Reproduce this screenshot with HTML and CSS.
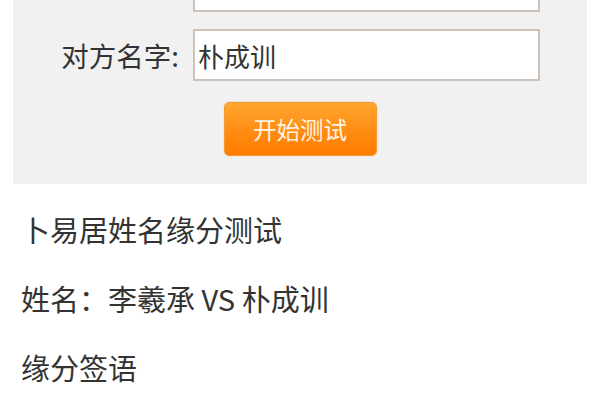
FILE: index.html
```html
<!DOCTYPE html>
<html lang="zh-CN">
<head>
<meta charset="utf-8">
<link rel="stylesheet" href="styles.css">
</head>
<body>
<form class="panel">
  <div class="row">
    <span class="label"></span>
    <input class="field" type="text" value="">
  </div>
  <div class="row">
    <label class="label">对方名字:</label>
    <input class="field" type="text" value="朴成训">
  </div>
  <div class="actions">
    <button class="btn" type="button">开始测试</button>
  </div>
</form>
<div class="result">
  <p class="line">卜易居姓名缘分测试</p>
  <p class="line">姓名：李羲承 VS 朴成训</p>
  <p class="line">缘分签语</p>
</div>
</body>
</html>
```
FILE: styles.css
```css
html, body {
  margin: 0;
  padding: 0;
  background: #ffffff;
  font-family: "Noto Sans CJK SC", "Noto Sans", sans-serif;
  color: #333333;
}
.panel {
  margin: -57px 13px 0;
  padding: 17px 0 27px;
  background: #f1f1f1;
  display: flex;
  flex-direction: column;
  gap: 17px;
  border-bottom: 1px solid #f1f1f1;
}
.row {
  display: grid;
  grid-template-columns: 180px 347px;
  align-items: center;
}
.label {
  text-align: right;
  padding-right: 14px;
  font-size: 27.5px;
  color: #333;
}
.field {
  box-sizing: border-box;
  height: 52px;
  width: 347px;
  margin: 0;
  border: 2px solid #cfc2b8;
  background: #ffffff;
  padding: 0 3px;
  font-family: "Noto Sans CJK SC", sans-serif;
  font-size: 26px;
  color: #333;
  outline: none;
}
.actions {
  display: flex;
  justify-content: center;
  padding-top: 4px;
}
.btn {
  width: 153px;
  height: 54px;
  border: 1px solid #f39a3a;
  border-radius: 5px;
  background: linear-gradient(#ffa630, #ff8a10 60%, #ff7c00);
  color: #fff4e2;
  font-family: "Noto Sans CJK SC", sans-serif;
  font-size: 23.5px;
  padding: 0;
  box-shadow: 0 0 2px rgba(255, 170, 90, 0.5);
}
.result {
  padding: 25px 21px 0;
}
.line {
  margin: 0 0 29px;
  font-size: 29px;
  line-height: 40px;
  color: #333;
}
```
